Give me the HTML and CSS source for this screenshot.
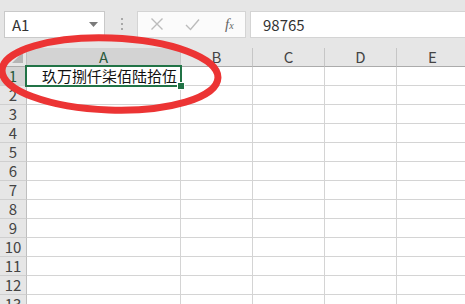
FILE: index.html
```html
<!DOCTYPE html>
<html lang="zh-CN">
<head>
    <meta charset="UTF-8">
    <meta name="viewport" content="width=device-width, initial-scale=1.0">
    <title>Sheet</title>
    <link rel="stylesheet" href="styles.css">
</head>
<body>
    <div class="toolbar">
        <div class="name-box">
            <span>A1</span>
            <svg class="caret" width="9" height="5" viewBox="0 0 9 5"><path d="M0 0h9L4.5 5z" fill="#7a7a7a"/></svg>
        </div>
        <div class="dots"><i></i><i></i><i></i></div>
        <div class="fx-buttons">
            <svg width="14" height="14" viewBox="0 0 14 14"><path d="M1.5 1.5l11 11M12.5 1.5l-11 11" stroke="#bcbcbc" stroke-width="1.4" fill="none"/></svg>
            <svg width="15" height="13" viewBox="0 0 15 13"><path d="M1 7l4.5 4.5L14 1.5" stroke="#bcbcbc" stroke-width="1.4" fill="none"/></svg>
            <span class="fx">f<sub>x</sub></span>
        </div>
        <div class="formula">98765</div>
    </div>

    <div class="sheet">
        <div class="corner"><svg width="11" height="11" viewBox="0 0 11 11"><path d="M11 0v11H0z" fill="#b5b5b5"/></svg></div>
        <div class="col-head active">A</div>
        <div class="col-head">B</div>
        <div class="col-head">C</div>
        <div class="col-head">D</div>
        <div class="col-head">E</div>
    </div>

    <div class="sheet" id="rows"></div>

    <svg class="mark" width="465" height="304" viewBox="0 0 465 304">
        <ellipse cx="110" cy="74" rx="108" ry="36" transform="rotate(2 110 74)" fill="none" stroke="#ec3434" stroke-width="7"/>
    </svg>

    <script>
        const rows = document.getElementById('rows');
        for (let r = 1; r <= 13; r++) {
            let html = '<div class="row-head' + (r === 1 ? ' active' : '') + '">' + r + '</div>';
            for (let c = 0; c < 5; c++) {
                if (r === 1 && c === 0) {
                    html += '<div class="cell selected">玖万捌仟柒佰陆拾伍<b class="handle"></b></div>';
                } else {
                    html += '<div class="cell"></div>';
                }
            }
            rows.insertAdjacentHTML('beforeend', html);
        }
    </script>
</body>
</html>
```

FILE: styles.css
```css
body {
    margin: 0;
    width: 465px;
    height: 304px;
    overflow: hidden;
    position: relative;
    background: #fff;
    font-family: "Noto Sans CJK SC", "DejaVu Sans", sans-serif;
    color: #333;
}

.toolbar {
    display: flex;
    align-items: center;
    height: 48px;
    padding-left: 4px;
    box-sizing: border-box;
    background: #e6e6e6;
}

.name-box {
    display: flex;
    align-items: center;
    justify-content: space-between;
    width: 101px;
    height: 27px;
    box-sizing: border-box;
    padding: 0 6px 0 7px;
    background: #fff;
    border: 1px solid #c9c9c9;
    font-size: 15px;
    color: #333;
}

.dots {
    display: flex;
    flex-direction: column;
    gap: 3px;
    margin: 0 14px 0 16px;
}

.dots i {
    display: block;
    width: 2px;
    height: 2px;
    background: #a8a8a8;
}

.fx-buttons {
    display: flex;
    align-items: center;
    width: 109px;
    height: 27px;
    box-sizing: border-box;
    padding-left: 12px;
    gap: 21px;
    background: #fbfbfb;
    border: 1px solid #d4d4d4;
}

.fx {
    font-family: "Liberation Serif", serif;
    font-style: italic;
    font-size: 15px;
    color: #666;
    margin-left: 4px;
}

.fx sub {
    font-size: 10px;
    vertical-align: 0;
}

.formula {
    flex: 1;
    height: 27px;
    box-sizing: border-box;
    margin-left: 4px;
    padding-left: 12px;
    line-height: 25px;
    background: #fff;
    border: 1px solid #d4d4d4;
    border-right: none;
    font-size: 15px;
    color: #333;
}

.sheet {
    display: grid;
    grid-template-columns: 27px 154px 72px 72px 72px 72px;
    grid-auto-rows: 19px;
}

.corner, .col-head, .row-head, .cell {
    box-sizing: border-box;
}

.corner {
    display: flex;
    align-items: flex-end;
    justify-content: flex-end;
    padding: 0 3px 3px 0;
    background: #e6e6e6;
    border-right: 1px solid #bfbfbf;
    border-bottom: 1px solid #ababab;
}

.col-head {
    background: #e6e6e6;
    border-right: 1px solid #c6c6c6;
    border-bottom: 1px solid #ababab;
    text-align: center;
    font-size: 15px;
    line-height: 18px;
    color: #444;
}

.col-head.active {
    background: #d3d3d3;
    color: #2a5a3c;
    border-bottom: 1px solid #217346;
}

.row-head {
    background: #e6e6e6;
    border-right: 1px solid #bfbfbf;
    border-bottom: 1px solid #cfcfcf;
    text-align: center;
    font-size: 15px;
    line-height: 18px;
    color: #444;
}

.row-head.active {
    background: #d3d3d3;
    color: #2a5a3c;
    border-right: 1px solid #217346;
}

.cell {
    border-right: 1px solid #d4d4d4;
    border-bottom: 1px solid #d4d4d4;
}

.cell.selected {
    position: relative;
    text-align: right;
    padding-right: 3px;
    font-size: 15px;
    line-height: 18px;
    color: #111;
}

.cell.selected::before {
    content: "";
    position: absolute;
    left: -2px;
    top: -2px;
    right: -2px;
    bottom: -2px;
    border: 2px solid #217346;
}

.handle {
    position: absolute;
    right: -5px;
    bottom: -5px;
    width: 6px;
    height: 6px;
    background: #217346;
    border: 1px solid #fff;
}

.mark {
    position: absolute;
    left: 0;
    top: 0;
    pointer-events: none;
}
```
